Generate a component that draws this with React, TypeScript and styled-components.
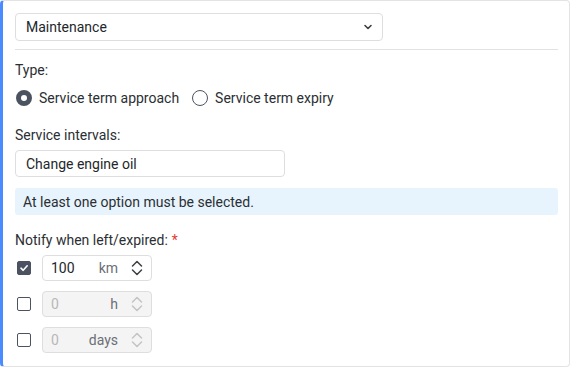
import styled, { createGlobalStyle } from "styled-components";

const GlobalStyle = createGlobalStyle`
  html, body {
    margin: 0;
    padding: 0;
    background: #ffffff;
  }
  body {
    font-family: Roboto, "Liberation Sans", Arial, sans-serif;
    font-size: 14px;
    color: #2b2f33;
  }
`;

const Panel = styled.div`
  box-sizing: border-box;
  width: 570px;
  height: 367px;
  border: 1px solid #e3e3e3;
  border-left: 3px solid #4a8cff;
  border-radius: 4px;
  padding: 12px 11px 0 12px;
  display: flex;
  flex-direction: column;
`;

const SelectBox = styled.div`
  box-sizing: border-box;
  width: 368px;
  height: 28px;
  border: 1px solid #dedede;
  border-radius: 4px;
  display: flex;
  align-items: center;
  justify-content: space-between;
  padding: 0 8px 0 10px;
  font-size: 14px;
  color: #23272b;
`;

const Divider = styled.div`
  height: 1px;
  background: #e2e2e2;
  margin-top: 8px;
`;

const Label = styled.div<{ $gap: number }>`
  margin-top: ${({ $gap }) => $gap}px;
  line-height: 20px;
  font-size: 14px;
  color: #2b2f33;
`;

const Required = styled.span`
  color: #e53935;
  margin-left: 4px;
`;

const RadioRow = styled.div`
  display: flex;
  align-items: center;
  margin-top: 8px;
  height: 20px;
`;

const RadioOption = styled.label`
  display: flex;
  align-items: center;
  gap: 7px;
  margin-right: 12px;
  color: #2b2f33;
`;

const RadioCircle = styled.span<{ $checked?: boolean }>`
  box-sizing: border-box;
  width: 16px;
  height: 16px;
  border-radius: 50%;
  margin-left: 1px;
  border: ${({ $checked }) => ($checked ? "5px solid #4c5360" : "1.5px solid #4c5360")};
  background: #ffffff;
`;

const TextInput = styled.div`
  box-sizing: border-box;
  width: 270px;
  height: 27px;
  margin-top: 5px;
  border: 1px solid #dedede;
  border-radius: 4px;
  padding: 0 10px;
  display: flex;
  align-items: center;
  color: #23272b;
`;

const InfoBox = styled.div`
  box-sizing: border-box;
  height: 27px;
  margin-top: 11px;
  background: #e8f4fd;
  border-radius: 3px;
  padding: 0 8px;
  display: flex;
  align-items: center;
  color: #2b2f33;
`;

const Rows = styled.div`
  display: flex;
  flex-direction: column;
  gap: 10px;
  margin-top: 5px;
`;

const Row = styled.div`
  display: flex;
  align-items: center;
  gap: 11px;
`;

const CheckBox = styled.span<{ $checked?: boolean }>`
  box-sizing: border-box;
  width: 14px;
  height: 14px;
  margin-left: 2px;
  border-radius: 2px;
  border: 1.5px solid #4c5360;
  background: ${({ $checked }) => ($checked ? "#4c5360" : "#ffffff")};
  display: flex;
  align-items: center;
  justify-content: center;
`;

const NumberField = styled.div<{ $disabled?: boolean }>`
  box-sizing: border-box;
  width: 110px;
  height: 26px;
  border: 1px solid #dedede;
  border-radius: 4px;
  background: ${({ $disabled }) => ($disabled ? "#f4f4f4" : "#ffffff")};
  display: flex;
  align-items: center;
  padding: 0 7px 0 8px;
`;

const NumberValue = styled.span<{ $disabled?: boolean }>`
  flex: 1;
  color: ${({ $disabled }) => ($disabled ? "#b8b8b8" : "#23272b")};
`;

const Unit = styled.span`
  color: #6b6f75;
  margin-right: 12px;
`;

const Chevron = () => (
  <svg width="12" height="12" viewBox="0 0 12 12">
    <path d="M3 4.5 L6 7.5 L9 4.5" fill="none" stroke="#3c4046" strokeWidth="1.6" strokeLinecap="round" strokeLinejoin="round" />
  </svg>
);

const Spinner = ({ disabled }: { disabled?: boolean }) => (
  <svg width="14" height="20" viewBox="0 0 14 20">
    <g fill="none" stroke={disabled ? "#c4c4c4" : "#3c4046"} strokeWidth="1.5" strokeLinecap="round" strokeLinejoin="round">
      <path d="M2.5 8 L7 3.5 L11.5 8" />
      <path d="M2.5 12 L7 16.5 L11.5 12" />
    </g>
  </svg>
);

const Tick = () => (
  <svg width="10" height="10" viewBox="0 0 10 10">
    <path d="M2 5.2 L4.2 7.3 L8.2 2.8" fill="none" stroke="#ffffff" strokeWidth="1.6" strokeLinecap="round" strokeLinejoin="round" />
  </svg>
);

const notify = [
  { checked: true, value: "100", unit: "km" },
  { checked: false, value: "0", unit: "h" },
  { checked: false, value: "0", unit: "days" },
];

export default function App() {
  return (
    <>
      <GlobalStyle />
      <Panel>
        <SelectBox>
          <span>Maintenance</span>
          <Chevron />
        </SelectBox>
        <Divider />
        <Label $gap={10}>Type:</Label>
        <RadioRow>
          <RadioOption>
            <RadioCircle $checked />
            Service term approach
          </RadioOption>
          <RadioOption>
            <RadioCircle />
            Service term expiry
          </RadioOption>
        </RadioRow>
        <Label $gap={17}>Service intervals:</Label>
        <TextInput>Change engine oil</TextInput>
        <InfoBox>At least one option must be selected.</InfoBox>
        <Label $gap={15}>
          Notify when left/expired:<Required>*</Required>
        </Label>
        <Rows>
          {notify.map((n) => (
            <Row key={n.unit}>
              <CheckBox $checked={n.checked}>{n.checked && <Tick />}</CheckBox>
              <NumberField $disabled={!n.checked}>
                <NumberValue $disabled={!n.checked}>{n.value}</NumberValue>
                <Unit>{n.unit}</Unit>
                <Spinner disabled={!n.checked} />
              </NumberField>
            </Row>
          ))}
        </Rows>
      </Panel>
    </>
  );
}
